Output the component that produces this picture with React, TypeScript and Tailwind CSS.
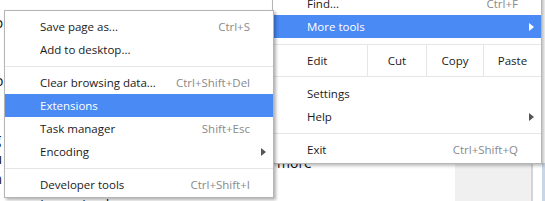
import React from 'react';

type Item =
  | { kind: 'item'; label: string; shortcut?: string; arrow?: boolean; active?: boolean }
  | { kind: 'sep' };

const subItems: Item[] = [
  { kind: 'item', label: 'Save page as...', shortcut: 'Ctrl+S' },
  { kind: 'item', label: 'Add to desktop...' },
  { kind: 'sep' },
  { kind: 'item', label: 'Clear browsing data...', shortcut: 'Ctrl+Shift+Del' },
  { kind: 'item', label: 'Extensions', active: true },
  { kind: 'item', label: 'Task manager', shortcut: 'Shift+Esc' },
  { kind: 'item', label: 'Encoding', arrow: true },
  { kind: 'sep' },
  { kind: 'item', label: 'Developer tools', shortcut: 'Ctrl+Shift+I' },
];

function Arrow({ active }: { active?: boolean }) {
  return (
    <svg width="5" height="8" viewBox="0 0 5 8" className="shrink-0">
      <polygon points="0,0 5,4 0,8" fill={active ? '#ffffff' : '#555555'} />
    </svg>
  );
}

function Row({ label, shortcut, arrow, active, pl }: { label: string; shortcut?: string; arrow?: boolean; active?: boolean; pl: string }) {
  return (
    <div
      className={`flex items-center h-[23px] ${pl} ${active ? 'bg-[#4a8af4] text-white' : 'text-[#1a1a1a]'}`}
    >
      <span className="flex-1 whitespace-nowrap">{label}</span>
      {shortcut && (
        <span className={`whitespace-nowrap pr-[23px] ${active ? 'text-white' : 'text-[#8a8a8a]'}`}>{shortcut}</span>
      )}
      {arrow && (
        <span className="pr-[7px] flex items-center">
          <Arrow active={active} />
        </span>
      )}
    </div>
  );
}

function Sep() {
  return (
    <div className="h-[10px] flex items-center">
      <div className="h-px w-full bg-[#e6e6e6]" />
    </div>
  );
}

export default function App() {
  return (
    <div
      className="relative w-[545px] h-[201px] overflow-hidden bg-white text-[11.5px]"
      style={{ fontFamily: '"Open Sans", "Noto Sans", sans-serif' }}
    >
      {/* page behind the menus */}
      <div className="absolute left-[-10px] top-[13px] text-[14px] text-[#111] leading-[20px]">
        <div className="h-[20px]">for</div>
        <div className="h-[20px]" />
        <div className="h-[20px] mt-[18px]">tol</div>
        <div className="h-[20px]">ti</div>
        <div className="h-[20px] mt-[18px]">ig</div>
        <div className="h-[20px]">iu</div>
        <div className="h-[20px]">in</div>
      </div>
      <div className="absolute left-0 top-[195px] text-[14px] text-[#111] leading-[20px]">ecure is received</div>
      <div className="absolute left-[277px] top-[153px] text-[14px] text-[#111] leading-[20px]">more</div>
      <div className="absolute left-[455px] top-[163px] w-[78px] h-[40px] bg-[#f0f0f0] border-r-2 border-[#d4d4d4]" />
      <div className="absolute left-[542px] top-[163px] w-[3px] h-[40px] bg-[#c9d6e6]" />

      {/* main menu */}
      <div className="absolute left-[272px] top-[-9px] w-[270px] bg-white border border-[#b5b5b5] shadow-[2px_2px_3px_rgba(0,0,0,0.25)] pb-[2px]">
        <Row label="Find..." shortcut="Ctrl+F" pl="pl-[34px]" />
        <Row label="More tools" arrow active pl="pl-[34px]" />
        <div className="h-[6px]" />
        <div className="flex h-[33px] border-y border-[#e6e6e6] text-[#1a1a1a]">
          <div className="w-[94px] pl-[34px] flex items-center">Edit</div>
          <div className="w-[59px] border-l border-[#e6e6e6] flex items-center justify-center">Cut</div>
          <div className="w-[57px] border-l border-[#e6e6e6] flex items-center justify-center">Copy</div>
          <div className="flex-1 border-l border-[#e6e6e6] flex items-center justify-center">Paste</div>
        </div>
        <div className="h-[5px]" />
        <Row label="Settings" pl="pl-[34px]" />
        <Row label="Help" arrow pl="pl-[34px]" />
        <Sep />
        <Row label="Exit" shortcut="Ctrl+Shift+Q" pl="pl-[34px]" />
      </div>

      {/* More tools submenu */}
      <div className="absolute left-[4px] top-[10px] w-[270px] bg-white border border-[#b5b5b5] shadow-[2px_2px_3px_rgba(0,0,0,0.3)] pt-[4px] pb-[1px]">
        {subItems.map((it, i) =>
          it.kind === 'sep' ? (
            <Sep key={i} />
          ) : (
            <Row key={i} label={it.label} shortcut={it.shortcut} arrow={it.arrow} active={it.active} pl="pl-[35px]" />
          )
        )}
      </div>
    </div>
  );
}
